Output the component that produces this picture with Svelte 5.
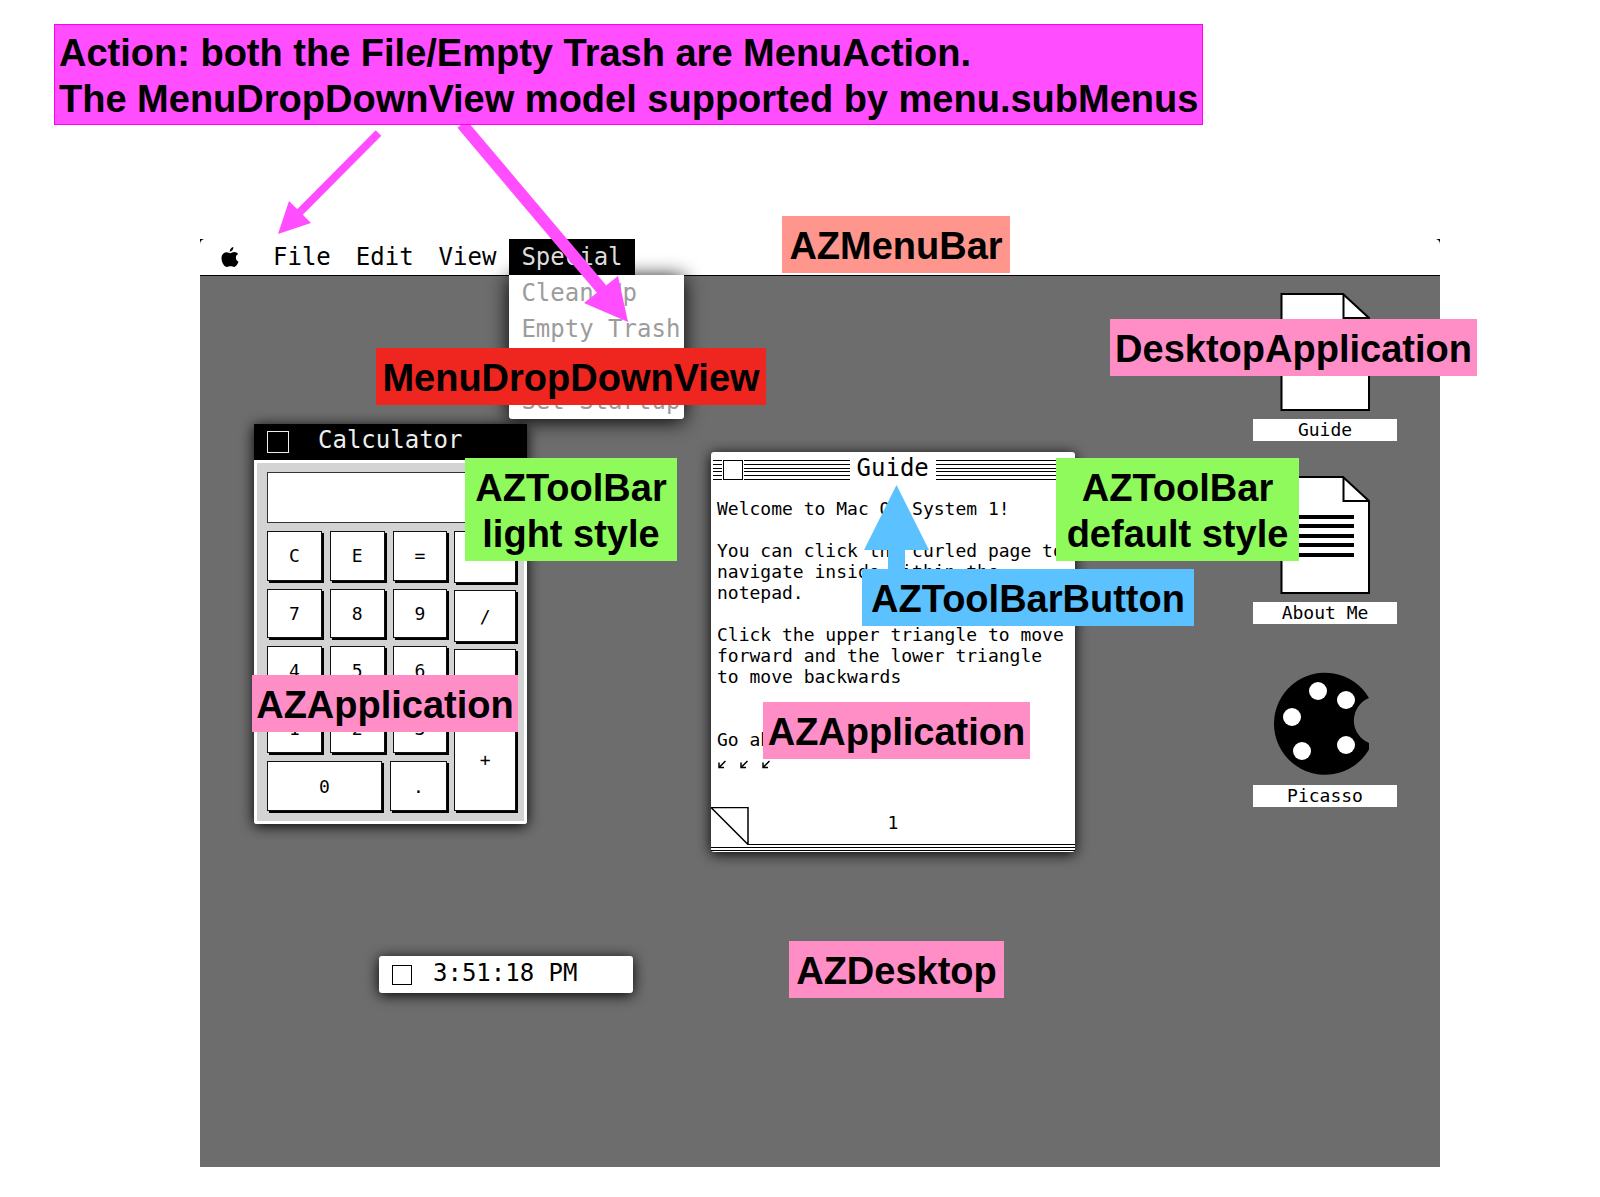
<script>
  const menus = ['File', 'Edit', 'View', 'Special'];
  const subMenus = ['Clean Up', 'Empty Trash', 'Erase Disk', 'Set Startup'];
  const keys = ['C', 'E', '=', '7', '8', '9', '4', '5', '6', '1', '2', '3'];
  const sideKeys = ['*', '/', '-', '+'];
  const textLines = [39, 48, 58, 67, 77];

  let open = $state('Special');
  let display = $state('');

  function press(key) {
    display = key === 'C' ? '' : display + key;
  }
</script>

{#snippet page(lines)}
  <svg class="art" viewBox="0 1 144 117" aria-hidden="true">
    <path d="M28.500 1H90L116 25V117H28.500Z" fill="#fff" stroke="#000" stroke-width="2" />
    <path d="M90.500 1V25H116" fill="none" stroke="#000" stroke-width="2" />
    {#if lines}
      {#each textLines as y}
        <rect x="43" {y} width="58" height="4" fill="#000" />
      {/each}
    {/if}
  </svg>
{/snippet}

<div class="page">
  <p class="note action">
    Action: both the File/Empty Trash are MenuAction.<br />The MenuDropDownView model supported by menu.subMenus
  </p>

  <main class="desktop">
    <div class="barback">
      <nav class="menubar" aria-label="Menu bar">
        <button class="menu apple" aria-label="Apple menu">
          <svg width="18" height="20" viewBox="0 0 18 20" aria-hidden="true">
            <path d="M12.400 0C12.500 2.500 10.800 4.700 8.600 4.800C8.500 2.500 10.300 .4 12.400 0Z" />
            <path d="M17 7C15.600 7.900 14.900 9.100 14.900 10.700C14.900 12.600 16 14 17.500 14.600C16.900 16.700 15 20 13.200 20C11.900 20 11.300 19.300 9.600 19.300C7.900 19.300 7.200 20 6 20C3.500 20 .5 15.500 .5 11.200C.5 7.400 2.900 5.200 5.500 5.200C7.200 5.200 8.300 6.200 9.300 6.200C10.300 6.200 11.500 5.100 13.500 5.100C14.900 5.100 16.200 5.800 17 7Z" />
          </svg>
        </button>
        {#each menus as name}
          <div class="slot">
            <button class="menu" class:active={open === name} onclick={() => (open = name)}>{name}</button>
            {#if name === 'Special' && open === name}
              <ul class="dropdown">
                {#each subMenus as item}
                  <li><button class="item" disabled>{item}</button></li>
                {/each}
              </ul>
            {/if}
          </div>
        {/each}
      </nav>
    </div>

    <section class="window calc" aria-label="Calculator">
      <header class="dark">
        <button class="close" aria-label="Close Calculator"></button>
        <h2>Calculator</h2>
      </header>
      <div class="body">
        <input class="display" aria-label="Result" bind:value={display} />
        <div class="pad">
          <div class="left">
            {#each keys as key}
              <button class="key" onclick={() => press(key)}>{key}</button>
            {/each}
            <div class="last">
              <button class="key" onclick={() => press('0')}>0</button>
              <button class="key" onclick={() => press('.')}>.</button>
            </div>
          </div>
          <div class="side">
            {#each sideKeys as key}
              <button class="key" onclick={() => press(key)}>{key}</button>
            {/each}
          </div>
        </div>
      </div>
    </section>

    <section class="window guide" aria-label="Guide">
      <header class="lined">
        <div class="lines short">{#each Array(6) as _}<i></i>{/each}</div>
        <button class="close" aria-label="Close Guide"></button>
        <div class="lines">{#each Array(6) as _}<i></i>{/each}</div>
        <h2>Guide</h2>
        <div class="lines">{#each Array(6) as _}<i></i>{/each}</div>
      </header>
      <div class="text">{`Welcome to Mac OS System 1!

You can click the curled page to
navigate inside within the
notepad.

Click the upper triangle to move
forward and the lower triangle
to move backwards


Go ahead, try it!`}</div>
      <div class="hints" aria-hidden="true">
        {#each Array(3) as _}
          <svg width="8" height="9" viewBox="0 0 8 9"><path d="M7.500 1L2 6.500M1 2.500V7.500H6" /></svg>
        {/each}
      </div>
      <footer>
        <button class="curl" aria-label="Turn page">
          <svg width="38" height="38" viewBox="0 0 38 38" aria-hidden="true"><path d="M0 .5H37V37.500L0 .5" /></svg>
        </button>
        <span>1</span>
      </footer>
      <div class="sheets"><i></i><i></i><i></i></div>
    </section>

    <section class="window clock" aria-label="Clock">
      <button class="close" aria-label="Close Clock"></button>
      <time>3:51:18 PM</time>
    </section>

    <div class="icons">
      <button class="app">{@render page(false)}<span>Guide</span></button>
      <button class="app">{@render page(true)}<span>About Me</span></button>
      <button class="app">
        <svg class="art" viewBox="0 -1 144 117" aria-hidden="true">
          <path d="M116 37A51 51 0 1 0 116 88.500V82A24.300 24.300 0 0 1 116 37Z" />
          <g fill="#fff">
            <circle cx="65" cy="30" r="9" />
            <circle cx="93" cy="39" r="9" />
            <circle cx="39" cy="56" r="9" />
            <circle cx="49" cy="90" r="9" />
            <circle cx="93" cy="84" r="9" />
          </g>
        </svg>
        <span>Picasso</span>
      </button>
    </div>
  </main>

  <svg class="arrows" width="940" height="600" viewBox="0 0 940 600" aria-hidden="true">
    <g fill="#ff4dff" stroke="#ff4dff">
      <path d="M378.500 133L298 214" stroke-width="8" />
      <path d="M278 234L289 201L311 223Z" stroke="none" />
      <path d="M462 124L604 292" stroke-width="12" />
      <path d="M628 322L618 276L584 303Z" stroke="none" />
    </g>
    <path d="M896.500 485L929 550H905V572H888V550H864Z" fill="#5bc1ff" />
  </svg>

  <p class="note menubar-note">AZMenuBar</p>
  <p class="note dropdown-note">MenuDropDownView</p>
  <p class="note app-note">DesktopApplication</p>
  <p class="note light-note">AZToolBar<br />light style</p>
  <p class="note default-note">AZToolBar<br />default style</p>
  <p class="note button-note">AZToolBarButton</p>
  <p class="note calc-note">AZApplication</p>
  <p class="note guide-note">AZApplication</p>
  <p class="note desktop-note">AZDesktop</p>
</div>

<style>
  :global(body) {
    margin: 0;
    background: #fff;
  }

  .page {
    position: relative;
    display: flow-root;
    padding-bottom: 30px;
    color: #000;
    font-family: 'DejaVu Sans Mono', Menlo, monospace;
  }

  button,
  input {
    box-sizing: border-box;
    margin: 0;
    padding: 0;
    border: 0;
    border-radius: 0;
    background: none;
    color: inherit;
    font: inherit;
  }

  h2,
  p,
  ul {
    margin: 0;
    padding: 0;
    list-style: none;
  }

  h2 {
    font-size: 24px;
    line-height: 28px;
    font-weight: 400;
  }

  /* Desktop and menu bar */
  .desktop {
    position: relative;
    min-height: 928px;
    margin: 114px 160px 0 200px;
    background: #6d6d6d;
  }

  .barback {
    background: #000;
  }

  .menubar {
    display: flex;
    gap: 1px;
    height: 36px;
    border-bottom: 1px solid #000;
    border-radius: 5px 5px 0 0;
    background: #fff;
    font-size: 24px;
  }

  .slot {
    position: relative;
  }

  .menu {
    position: relative;
    z-index: 3;
    display: block;
    height: 36px;
    padding: 0 12px;
    line-height: 36px;
  }

  .apple {
    padding: 0 21px;
  }

  .apple svg {
    display: block;
  }

  .menu.active {
    background: #000;
    color: #dcdcdc;
  }

  .dropdown {
    position: absolute;
    z-index: 2;
    top: 36px;
    left: 0;
    width: 175px;
    border-radius: 0 0 3px 3px;
    background: #fff;
    box-shadow: 0 2px 20px #000;
  }

  .item {
    display: block;
    height: 36px;
    padding-left: 12px;
    color: #9c9c9c;
    white-space: nowrap;
  }

  /* Windows */
  .window {
    position: absolute;
    border-radius: 3px;
    background: #fff;
    box-shadow: 0 2px 14px #000;
  }

  .close {
    flex: none;
    width: 22px;
    height: 22px;
    border: 1px solid currentColor;
  }

  .calc {
    top: 185px;
    left: 54px;
    width: 273px;
  }

  .dark {
    display: flex;
    align-items: center;
    gap: 29px;
    height: 36px;
    padding-left: 13px;
    background: #000;
    color: #eee;
  }

  .dark h2 {
    padding-bottom: 4px;
  }

  .body {
    padding: 9px 7px 10px 10px;
    border: 3px solid #fff;
    border-radius: 3px;
    background: #d3d3d3;
    font-size: 18px;
  }

  .display {
    display: block;
    width: 100%;
    height: 51px;
    padding: 0 8px;
    border: 1px solid #333;
    background: #fff;
    text-align: right;
  }

  .pad {
    display: grid;
    grid-template-columns: 181fr 62fr;
    gap: 7px;
    height: 280px;
    margin-top: 8px;
    padding-right: 1px;
  }

  .left {
    display: grid;
    grid-template-columns: repeat(3, 1fr);
    grid-auto-rows: 1fr;
    gap: 8px;
  }

  .last {
    display: grid;
    grid-column: 1 / -1;
    grid-template-columns: 2fr 1fr;
    gap: 8px;
  }

  .side {
    display: grid;
    grid-template-rows: 52fr 52fr 52fr 103fr;
    gap: 7px;
  }

  .key {
    border: 1px solid #111;
    background: #fff;
    box-shadow: 2px 2px 0 #000;
  }

  .guide {
    top: 213px;
    left: 511px;
    width: 364px;
  }

  .lined {
    display: flex;
    align-items: center;
    gap: 1px;
    height: 36px;
    padding: 0 2px;
  }

  .lined .close {
    width: 20px;
    height: 20px;
  }

  .lined h2 {
    padding: 0 6px 4px;
  }

  .lines {
    display: flex;
    flex: 1 1 0;
    flex-direction: column;
    justify-content: space-between;
    height: 20px;
  }

  .lines.short {
    flex: none;
    width: 9px;
  }

  .lines + h2 + .lines {
    flex-grow: 1.3;
  }

  .lines i,
  .sheets i {
    height: 1px;
    background: #000;
  }

  .text {
    padding: 10px 0 0 6px;
    font-size: 18px;
    line-height: 21px;
    white-space: pre;
  }

  .hints {
    display: flex;
    gap: 14px;
    padding: 10px 0 0 7px;
  }

  .hints path,
  .curl path {
    fill: none;
    stroke: #000;
    stroke-width: 1.500;
  }

  footer {
    display: grid;
    grid-template-columns: 38px 1fr 38px;
    align-items: center;
    margin-top: 38px;
    font-size: 18px;
    text-align: center;
  }

  footer span {
    padding-bottom: 8px;
  }

  .curl,
  .curl svg {
    display: block;
    width: 38px;
    height: 38px;
  }

  .sheets {
    display: flex;
    flex-direction: column;
    gap: 2px;
    margin-top: -1px;
    padding-bottom: 1px;
  }

  .sheets i:first-child {
    margin-left: 37px;
  }

  .clock {
    top: 717px;
    left: 179px;
    display: flex;
    align-items: center;
    gap: 21px;
    box-sizing: border-box;
    width: 254px;
    height: 37px;
    padding-left: 13px;
    font-size: 24px;
    line-height: 28px;
  }

  .clock .close {
    width: 20px;
    height: 20px;
  }

  .clock time {
    padding-bottom: 4px;
  }

  /* Desktop icons */
  .icons {
    display: flex;
    flex-direction: column;
    align-items: flex-end;
    gap: 36px;
    padding: 18px 43px 0 0;
  }

  .app {
    display: flex;
    flex-direction: column;
    gap: 8px;
    width: 144px;
    font-size: 18px;
    line-height: 22px;
  }

  .app span {
    width: 100%;
    background: #fff;
  }

  .art {
    display: block;
    width: 144px;
    height: 117px;
    overflow: visible;
  }

  /* Annotations lying over the desktop */
  .arrows {
    position: absolute;
    z-index: 4;
    top: 0;
    left: 0;
    pointer-events: none;
  }

  .note {
    position: absolute;
    z-index: 5;
    box-sizing: border-box;
    padding: 7px 0 4px;
    background: #ff8ec6;
    font: 700 38px/46px 'Liberation Sans', Helvetica, Arial, sans-serif;
    text-align: center;
    white-space: nowrap;
  }

  .action {
    position: relative;
    width: fit-content;
    margin: 24px 0 0 54px;
    padding: 5px 4px 2px;
    border: 1px solid #ff00f0;
    background: #ff4dff;
    text-align: left;
  }

  .menubar-note {
    top: 216px;
    left: 782px;
    width: 228px;
    background: #ff968d;
  }

  .dropdown-note {
    top: 348px;
    left: 376px;
    width: 390px;
    background: #ee261f;
  }

  .app-note {
    top: 319px;
    right: 123px;
    width: 367px;
  }

  .light-note {
    top: 458px;
    left: 465px;
    width: 212px;
    background: #8efa5b;
  }

  .default-note {
    top: 458px;
    left: 1056px;
    width: 243px;
    background: #8efa5b;
  }

  .button-note {
    top: 569px;
    left: 862px;
    width: 332px;
    background: #5bc1ff;
  }

  .calc-note {
    top: 675px;
    left: 252px;
    width: 266px;
  }

  .guide-note {
    top: 702px;
    left: 763px;
    width: 267px;
  }

  .desktop-note {
    top: 941px;
    left: 789px;
    width: 215px;
  }
</style>
